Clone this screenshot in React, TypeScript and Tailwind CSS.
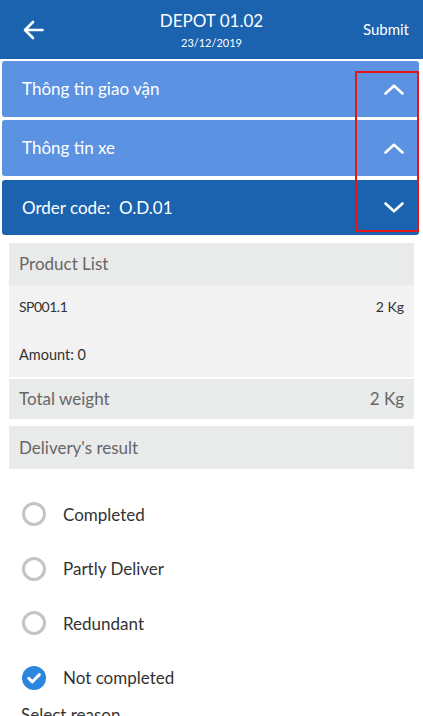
import React from "react";

const font = { fontFamily: "Lato, 'Open Sans', sans-serif" };

function ChevronUp() {
  return (
    <svg width="20" height="11" viewBox="0 0 20 11" fill="none">
      <path d="M1.5 9.5 L10 1.8 L18.5 9.5" stroke="white" strokeWidth="2.6" strokeLinecap="round" strokeLinejoin="round" />
    </svg>
  );
}
function ChevronDown() {
  return (
    <svg width="20" height="11" viewBox="0 0 20 11" fill="none">
      <path d="M1.5 1.5 L10 9.2 L18.5 1.5" stroke="white" strokeWidth="2.6" strokeLinecap="round" strokeLinejoin="round" />
    </svg>
  );
}

function Radio({ label, checked }: { label: string; checked?: boolean }) {
  return (
    <div className="flex h-[54.5px] items-center">
      <div className="ml-[22px] flex h-[24px] w-[24px] items-center justify-center">
        {checked ? (
          <svg width="24" height="24" viewBox="0 0 24 24">
            <circle cx="12" cy="12" r="12" fill="#2b87dd" />
            <path d="M6.8 12.3 L10.4 15.8 L17.4 8.6" stroke="white" strokeWidth="3" fill="none" strokeLinecap="round" strokeLinejoin="round" />
          </svg>
        ) : (
          <div className="h-[24px] w-[24px] rounded-full border-[3px] border-[#c4c4c4]" />
        )}
      </div>
      <span className="ml-[17px] text-[17px] text-[#333333]">{label}</span>
    </div>
  );
}

export default function App() {
  return (
    <div className="relative h-[716px] w-[423px] overflow-hidden bg-white" style={font}>
      {/* Header */}
      <div className="flex h-[59px] items-center bg-[#1b63af] text-white">
        <div className="flex w-[60px] items-center pl-[23px]">
          <svg width="21" height="20" viewBox="0 0 21 20" fill="none">
            <path d="M19.5 10 H2.5 M10 2 L2 10 L10 18" stroke="white" strokeWidth="2.6" strokeLinecap="round" strokeLinejoin="round" />
          </svg>
        </div>
        <div className="flex flex-1 flex-col items-center pt-[1px]">
          <div className="text-[17px] leading-[22px]">DEPOT 01.02</div>
          <div className="mt-[4px] text-[11px] leading-[14px]">23/12/2019</div>
        </div>
        <div className="flex w-[60px] justify-end pr-[14px] text-[15px]">Submit</div>
      </div>

      {/* Accordions */}
      <div className="px-[2px] pr-[4px]">
        <div className="mt-[2px] flex h-[56px] items-center justify-between rounded-[3px] bg-[#5b92e1] pl-[20px] pr-[15px] text-white">
          <span className="text-[17px]">Thông tin giao vận</span>
          <ChevronUp />
        </div>
        <div className="mt-[3px] flex h-[56px] items-center justify-between rounded-[3px] bg-[#5b92e1] pl-[20px] pr-[15px] text-white">
          <span className="text-[17px]">Thông tin xe</span>
          <ChevronUp />
        </div>
        <div className="mt-[4px] flex h-[55px] items-center justify-between rounded-[3px] bg-[#1b63af] pl-[20px] pr-[15px] text-white">
          <span className="text-[17px]">Order code:&nbsp; O.D.01</span>
          <ChevronDown />
        </div>
      </div>

      {/* Product list */}
      <div className="mx-[9px] mt-[8px]">
        <div className="flex h-[42px] items-center bg-[#e9eaea] px-[10px] text-[17px] text-[#666666]">Product List</div>
        <div className="flex h-[92px] flex-col justify-between bg-[#f2f2f2] px-[10px] pb-[11px] pt-[11px] text-[14px] text-[#333333]">
          <div className="flex justify-between">
            <span className="tracking-[-0.5px]">SP001.1</span>
            <span>2 Kg</span>
          </div>
          <div className="text-[14.5px]">Amount: 0</div>
        </div>
        <div className="mt-[2px] flex h-[40px] items-center justify-between bg-[#e9eaea] px-[10px] text-[17px] text-[#666666]">
          <span>Total weight</span>
          <span>2 Kg</span>
        </div>
        <div className="mt-[7px] flex h-[43px] items-center bg-[#e9eaea] px-[10px] text-[17px] text-[#666666]">Delivery's result</div>
      </div>

      {/* Radios */}
      <div className="mt-[18px]">
        <Radio label="Completed" />
        <Radio label="Partly Deliver" />
        <Radio label="Redundant" />
        <Radio label="Not completed" checked />
      </div>
      <div className="pl-[21px] text-[17px] leading-[20px] text-[#333333]">Select reason</div>

      {/* Annotation */}
      <div className="absolute left-[355px] top-[71px] h-[161px] w-[64px] border-2 border-[#e8141a]" />
    </div>
  );
}
